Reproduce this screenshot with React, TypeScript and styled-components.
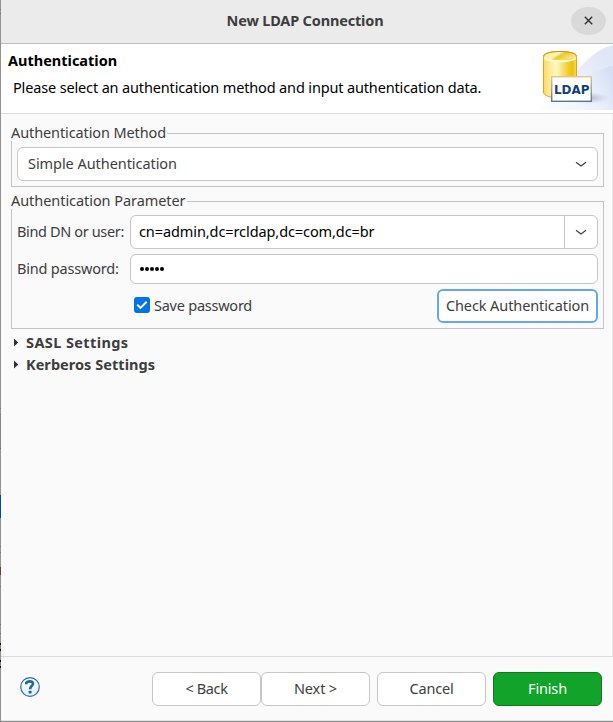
import React from 'react';
import styled, { createGlobalStyle } from 'styled-components';

const GlobalStyle = createGlobalStyle`
  *, *::before, *::after { box-sizing: border-box; }
  html, body { margin: 0; padding: 0; }
  body {
    background: #fafafa;
    color: #3d3d3d;
    font-family: "Noto Sans", "Open Sans", sans-serif;
    font-size: 14.5px;
    line-height: 20px;
    overflow: hidden;
  }
  button, input { font: inherit; color: inherit; margin: 0; }
`;

const Screen = styled.div`
  display: flex;
  width: 613px;
  height: 722px;
`;

/* Sliver of the windows behind the dialog */
const Backdrop = styled.div`
  display: flex;
  flex-direction: column;
  flex: none;
  width: 1px;
  background: #929292;
`;

const Sliver = styled.div<{ $h: number; $color?: string }>`
  flex: none;
  height: ${(p) => p.$h}px;
  background: ${(p) => p.$color ?? 'transparent'};
`;

const Dialog = styled.main`
  display: flex;
  flex-direction: column;
  width: 612px;
  height: 722px;
  background: #fafafa;
  border-bottom: 1px solid #929292;
  box-shadow: inset 0 -1px #e3e3e3;
`;

/* Single-line text with optional tracking; bottom padding optically centres it */
const Label = styled.span<{ $track?: number }>`
  display: block;
  padding-bottom: 2px;
  white-space: pre;
  letter-spacing: ${(p) => p.$track ?? 0}px;
`;

const TitleBar = styled.header`
  display: grid;
  grid-template-columns: 1fr auto 1fr;
  align-items: center;
  flex: none;
  height: 44px;
  padding: 0 7px 2px 0;
  background: #ebebeb;
  border-bottom: 1px solid #bdbdbd;
`;

const Title = styled(Label)`
  grid-column: 2;
  margin-left: 3px;
  font-weight: 700;
`;

const CloseButton = styled.button`
  display: grid;
  place-items: center;
  justify-self: end;
  width: 35px;
  height: 28px;
  padding: 0;
  border: 0;
  border-radius: 50%;
  background: #d9d9d9;
`;

const Banner = styled.section`
  display: flex;
  justify-content: space-between;
  flex: none;
  height: 70px;
  background: #fff;
  border-bottom: 1px solid #dcdcdc;
`;

const BannerText = styled.div`
  display: flex;
  flex-direction: column;
  gap: 5px;
  padding: 6px 0 0 7px;
  color: #000;
`;

const BannerTitle = styled(Label)`
  font-weight: 700;
`;

const BannerMessage = styled(Label)`
  padding-left: 5px;
`;

const Body = styled.div`
  display: flex;
  flex-direction: column;
  flex: 1;
  padding: 12px 8px 0 10px;
  border-right: 1px solid #eeeeee;
`;

const Group = styled.fieldset<{ $h: number }>`
  flex: none;
  min-width: 0;
  height: ${(p) => p.$h}px;
  margin: 0 0 7px;
  padding: 6px 5px 0;
  border: 1px solid #c3c3c3;
`;

const Legend = styled.legend`
  height: 15px;
  margin-left: -6px;
  padding: 0 1px 0 0;
  line-height: 12px;
  background: #fafafa;
`;

const Combo = styled.div`
  display: flex;
  align-items: center;
  justify-content: space-between;
  flex: 1;
  height: 34px;
  padding-left: 10px;
  background: #fff;
  border: 1px solid #c6c6c6;
  border-radius: 6px;
`;

const EditableCombo = styled(Combo)`
  padding-left: 8px;
  color: #000;
`;

const ComboArrow = styled.span<{ $divided?: boolean }>`
  display: grid;
  place-items: center;
  width: 33px;
  height: 100%;
  border-left: 1px solid ${(p) => (p.$divided ? '#c6c6c6' : 'transparent')};
`;

const FieldRow = styled.div<{ $gap: number }>`
  display: flex;
  align-items: center;
  margin-bottom: ${(p) => p.$gap}px;
`;

const FieldLabel = styled(Label)`
  flex: none;
  width: 113px;
`;

const PasswordField = styled.div`
  display: flex;
  align-items: center;
  gap: 1px;
  flex: 1;
  height: 30px;
  padding-left: 9px;
  background: #fff;
  border: 1px solid #c6c6c6;
  border-radius: 6px;
`;

const Dot = styled.span`
  width: 4px;
  height: 4px;
  border-radius: 50%;
  background: #000;
`;

const OptionRow = styled.div`
  display: flex;
  align-items: center;
  justify-content: space-between;
  padding-left: 117px;
`;

const CheckLabel = styled.label`
  display: flex;
  align-items: center;
  gap: 4px;
`;

const CheckBox = styled.span`
  display: grid;
  place-items: center;
  width: 16px;
  height: 16px;
  margin-top: -2px;
  border-radius: 3px;
  background: #0073e5;
`;

const FocusedButton = styled.button`
  width: 161px;
  height: 34px;
  padding: 0;
  background: #fff;
  border: 2px solid #62a8f0;
  border-radius: 6px;
`;

const Expander = styled.div`
  display: flex;
  align-items: center;
  gap: 7px;
  height: 22px;
  padding-left: 3px;
  font-weight: 700;

  svg { margin-top: -1px; }
`;

const Expanders = styled.div`
  display: flex;
  flex-direction: column;
  margin-top: -4px;
`;

const Footer = styled.footer`
  display: flex;
  align-items: flex-start;
  justify-content: space-between;
  flex: none;
  height: 65px;
  padding: 15px 11px 0 18px;
  border-top: 1px solid #dcdcdc;
`;

const HelpButton = styled.button`
  display: block;
  height: 22px;
  margin-top: 4px;
  padding: 0;
  border: 0;
  background: none;
`;

const Actions = styled.div`
  display: flex;
  gap: 7px;
`;

const Pager = styled.div`
  display: flex;
`;

const ActionButton = styled.button<{ $primary?: boolean }>`
  width: 109px;
  height: 34px;
  padding: 0;
  border-radius: 6px;
  border: 1px solid ${(p) => (p.$primary ? '#0c7a1d' : '#c6c6c6')};
  background: ${(p) => (p.$primary ? '#12a32a' : '#fff')};
  color: ${(p) => (p.$primary ? '#fff' : '#3d3d3d')};
`;

const LdapLogo = () => (
  <svg width="83" height="66" viewBox="0 0 83 66">
    <defs>
      <linearGradient id="sweep" x1="0" y1="1" x2="1" y2="0.4">
        <stop offset="0" stopColor="#fff" />
        <stop offset="1" stopColor="#e0e7f7" />
      </linearGradient>
      <linearGradient id="sweepLow" x1="0" y1="0.7" x2="1" y2="0.3">
        <stop offset="0.1" stopColor="#fff" stopOpacity="0" />
        <stop offset="1" stopColor="#cdd9f3" />
      </linearGradient>
      <linearGradient id="gold">
        <stop offset="0" stopColor="#f9dc62" />
        <stop offset="0.38" stopColor="#fffac5" />
        <stop offset="0.75" stopColor="#f1cc2b" />
        <stop offset="0.88" stopColor="#eec112" />
        <stop offset="1" stopColor="#f9df58" />
      </linearGradient>
      <linearGradient id="lid" x1="0" y1="0" x2="1" y2="0.4">
        <stop offset="0" stopColor="#f8e47a" />
        <stop offset="0.45" stopColor="#fff7b5" />
        <stop offset="0.6" stopColor="#edc829" />
        <stop offset="1" stopColor="#f8e67c" />
      </linearGradient>
      <linearGradient id="frame" x1="0" y1="0" x2="0" y2="1">
        <stop offset="0" stopColor="#eac28b" />
        <stop offset="0.5" stopColor="#a9a08e" />
        <stop offset="1" stopColor="#567c8b" />
      </linearGradient>
      <radialGradient id="shade">
        <stop offset="0" stopColor="#8d88a8" stopOpacity="0.65" />
        <stop offset="1" stopColor="#b9b9dc" stopOpacity="0" />
      </radialGradient>
    </defs>
    <path d="M83 1C66 5 50 20 40 38L8 66H83Z" fill="url(#sweep)" />
    <path d="M83 22C62 26 46 38 37 66H83Z" fill="url(#sweepLow)" opacity="0.6" />
    <g transform="translate(2 0)">
      <ellipse cx="56" cy="54" rx="22" ry="6" fill="url(#shade)" />
      <path
        d="M11.500 13C11.500 9.500 19 7.500 28 7.500S44.500 9.500 44.500 13V48C44.500 52 37 54 28 54S11.500 52 11.500 48Z"
        fill="url(#gold)"
        stroke="#e29f24"
      />
      <path d="M12.500 13.500C14 18.500 42 18.500 43.500 13.500" fill="none" stroke="#fffbd2" strokeWidth="2" />
      <ellipse cx="28" cy="12" rx="15.500" ry="4" fill="url(#lid)" />
      <path d="M11.500 12C12 9 19 7.500 28 7.500S44 9 44.500 12" fill="none" stroke="#d98c23" />
      <rect x="19.700" y="32.700" width="39.600" height="24.600" fill="#fff" stroke="url(#frame)" strokeWidth="1.400" />
      <text
        x="22"
        y="50"
        fill="#12407c"
        fontFamily="DejaVu Sans, sans-serif"
        fontSize="12"
        fontWeight="700"
        textLength="35.500"
        lengthAdjust="spacingAndGlyphs"
      >
        LDAP
      </text>
    </g>
  </svg>
);

const ChevronDown = () => (
  <svg width="12" height="7" viewBox="0 0 12 7" fill="none" stroke="#3d3d3d" strokeWidth="1.200">
    <path d="M1 1.300L6 5L11 1.300" />
  </svg>
);

const Arrow = () => (
  <svg width="5" height="9" viewBox="0 0 5 9" fill="#303030">
    <path d="M0 0.500L4.200 4.500L0 8.500Z" />
  </svg>
);

const HelpIcon = () => (
  <svg width="22" height="22" viewBox="0 0 22 22">
    <defs>
      <linearGradient id="help" x1="0" y1="0" x2="0" y2="1">
        <stop offset="0" stopColor="#ffffff" />
        <stop offset="1" stopColor="#dcecf7" />
      </linearGradient>
    </defs>
    <circle cx="11" cy="11" r="9.300" fill="url(#help)" stroke="#2f6ba5" strokeWidth="1.200" />
    <path
      d="M7.300 8.300V6.800C8.300 5.300 13.300 4.300 14 7.500C14.300 9.700 11.100 10.200 11.100 13.200"
      fill="none"
      stroke="#2563a0"
      strokeWidth="2.600"
    />
    <rect x="9.600" y="14.800" width="3" height="2.700" rx="0.800" fill="#2563a0" />
  </svg>
);

const backdropSlivers: Array<[number, string?]> = [
  [9], [1, '#777777'], [3], [1, '#777777'], [394], [1, '#7b7b7b'], [5],
  [1, '#7b7b7b'], [33, '#858585'], [1, '#707070'], [46], [23, '#004a9f'],
  [28], [1, '#7b7b7b'], [5], [1, '#7b7b7b'], [14], [8, '#743c2b'], [11],
  [1, '#777777'], [37], [1, '#4c8f4c'], [8], [1, '#5b7b6b'], [9],
  [2, '#111111'], [4, '#8b8269'], [2, '#111111'], [9], [2, '#111111'],
  [4, '#8b8269'], [2, '#111111'],
];

export default function App() {
  return (
    <Screen>
      <GlobalStyle />
      <Backdrop>
        {backdropSlivers.map(([h, color], i) => (
          <Sliver key={i} $h={h} $color={color} />
        ))}
      </Backdrop>
      <Dialog>
        <TitleBar>
          <Title $track={-0.17}>New LDAP Connection</Title>
          <CloseButton aria-label="Close">
            <svg width="9" height="9" viewBox="0 0 9 9" stroke="#303030" strokeWidth="1.400">
              <path d="M0.800 0.800L8.200 8.200M8.200 0.800L0.800 8.200" />
            </svg>
          </CloseButton>
        </TitleBar>
        <Banner>
          <BannerText>
            <BannerTitle>Authentication</BannerTitle>
            <BannerMessage $track={-0.15}>
              Please select an authentication method and input authentication data.
            </BannerMessage>
          </BannerText>
          <LdapLogo />
        </Banner>
        <Body>
          <Group $h={61}>
            <Legend><Label $track={-0.11}>Authentication Method</Label></Legend>
            <Combo>
              <Label $track={-0.06}>Simple Authentication</Label>
              <ComboArrow><ChevronDown /></ComboArrow>
            </Combo>
          </Group>
          <Group $h={135}>
            <Legend><Label $track={-0.06}>Authentication Parameter</Label></Legend>
            <FieldRow $gap={5}>
              <FieldLabel $track={-0.36}>Bind DN or user:</FieldLabel>
              <EditableCombo>
                <Label $track={-0.09}>cn=admin,dc=rcldap,dc=com,dc=br</Label>
                <ComboArrow $divided><ChevronDown /></ComboArrow>
              </EditableCombo>
            </FieldRow>
            <FieldRow $gap={5}>
              <FieldLabel $track={-0.19}>Bind password:</FieldLabel>
              <PasswordField>
                <Dot /><Dot /><Dot /><Dot /><Dot />
              </PasswordField>
            </FieldRow>
            <OptionRow>
              <CheckLabel>
                <CheckBox>
                  <svg width="12" height="10" viewBox="0 0 12 10" fill="none" stroke="#fff" strokeWidth="2">
                    <path d="M1.300 4.800L4.500 7.900L10.700 1.700" />
                  </svg>
                </CheckBox>
                <Label $track={-0.24}>Save password</Label>
              </CheckLabel>
              <FocusedButton><Label $track={-0.1}>Check Authentication</Label></FocusedButton>
            </OptionRow>
          </Group>
          <Expanders>
            <Expander><Arrow /><Label $track={0.4}>SASL Settings</Label></Expander>
            <Expander><Arrow /><Label $track={0.04}>Kerberos Settings</Label></Expander>
          </Expanders>
        </Body>
        <Footer>
          <HelpButton aria-label="Help"><HelpIcon /></HelpButton>
          <Actions>
            <Pager>
              <ActionButton><Label $track={-0.35}>{'< Back'}</Label></ActionButton>
              <ActionButton><Label $track={-0.14}>{'Next >'}</Label></ActionButton>
            </Pager>
            <ActionButton><Label $track={-0.19}>Cancel</Label></ActionButton>
            <ActionButton $primary><Label $track={-0.15}>Finish</Label></ActionButton>
          </Actions>
        </Footer>
      </Dialog>
    </Screen>
  );
}
